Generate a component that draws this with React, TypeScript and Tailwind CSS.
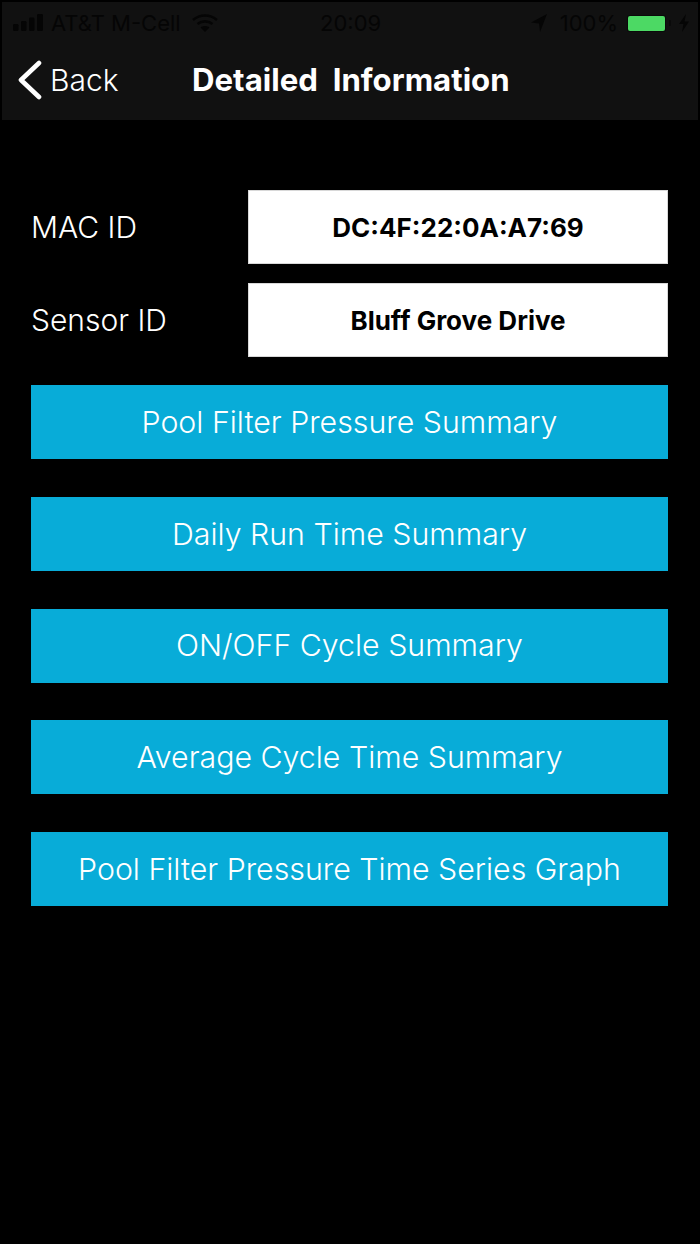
const buttons = [
  'Pool Filter Pressure Summary',
  'Daily Run Time Summary',
  'ON/OFF Cycle Summary',
  'Average Cycle Time Summary',
  'Pool Filter Pressure Time Series Graph',
];

function StatusBar() {
  return (
    <div className="relative flex h-[40px] items-center pt-[2px] pl-[10px] pr-[8px] text-[22px] text-[#050505]">
      <svg width="32" height="20" viewBox="0 0 32 20" fill="#050505">
        <rect x="1" y="11" width="5.5" height="7" rx="1.2" />
        <rect x="9" y="8" width="5.5" height="10" rx="1.2" />
        <rect x="17" y="4.5" width="5.5" height="13.5" rx="1.2" />
        <rect x="25" y="1" width="6" height="17" rx="1.2" />
      </svg>
      <span className="ml-[7px]">AT&amp;T M-Cell</span>
      <svg width="26" height="20" viewBox="0 0 26 20" className="ml-[11px]" fill="none" stroke="#050505" strokeWidth="2.6">
        <path d="M1 7C8 1 18 1 25 7" />
        <path d="M5.5 11C10 7.5 16 7.5 20.5 11" />
        <path d="M13 19L8.5 14.5C11 12.5 15 12.5 17.5 14.5Z" fill="#050505" stroke="none" />
      </svg>
      <span className="absolute left-[318px] top-[2px] leading-[38px]">20:09</span>
      <div className="ml-auto flex items-center">
        <svg width="18" height="20" viewBox="0 0 18 20" fill="#050505">
          <path d="M17 1L1 9.5L9 10.5L10 19Z" />
        </svg>
        <span className="ml-[12px]">100%</span>
        <div className="ml-[9px] flex h-[17px] w-[39px] rounded-[3px] bg-[#0a0a0a] p-[1px]">
          <div className="flex-1 rounded-[2px] bg-[#4cd964]" />
        </div>
        <div className="ml-[3px] h-[6px] w-[2px] rounded-r-[1px] bg-[#0a0a0a]" />
        <svg width="13" height="18" viewBox="0 0 13 18" fill="#050505" className="ml-[6px]">
          <path d="M9 0L2 10H6.5L5 18L12 7.5H7.5Z" />
        </svg>
      </div>
    </div>
  );
}

function NavBar() {
  return (
    <div className="mx-[2px] mt-[2px] h-[118px] bg-[#111111]">
      <StatusBar />
      <div className="relative flex h-[76px] items-center text-white">
        <svg width="26" height="40" viewBox="0 0 26 40" fill="none" stroke="white" strokeWidth="4.6" strokeLinecap="round" strokeLinejoin="round" className="ml-[15px]">
          <path d="M22 3L4 20L22 37" />
        </svg>
        <span className="ml-[7px] text-[30px] font-[350]">Back</span>
        <span className="absolute left-[190px] text-[31.2px] font-bold whitespace-pre">Detailed  Information</span>
      </div>
    </div>
  );
}

function InfoRow({ label, value }: { label: string; value: string }) {
  return (
    <div className="flex h-[74px] items-center">
      <span className="w-[217px] text-[30px] font-[350] text-white">{label}</span>
      <div className="flex h-full flex-1 items-center justify-center border border-[#d8d8d8] bg-white pt-[1px] text-[26px] font-bold text-black">
        {value}
      </div>
    </div>
  );
}

export default function App() {
  return (
    <div className="h-[1244px] overflow-hidden bg-black font-['Inter',sans-serif]">
      <NavBar />
      <div className="pt-[70px] pl-[31px] pr-[32px]">
        <div className="flex flex-col gap-[19px]">
          <InfoRow label="MAC ID" value="DC:4F:22:0A:A7:69" />
          <InfoRow label="Sensor ID" value="Bluff Grove Drive" />
        </div>
        <div className="mt-[28px] flex flex-col gap-[37.75px]">
          {buttons.map((b) => (
            <div key={b} className="flex h-[74px] items-center justify-center bg-[#08acd8] pt-[1px] text-[30.3px] font-[350] text-white">
              {b}
            </div>
          ))}
        </div>
      </div>
    </div>
  );
}
